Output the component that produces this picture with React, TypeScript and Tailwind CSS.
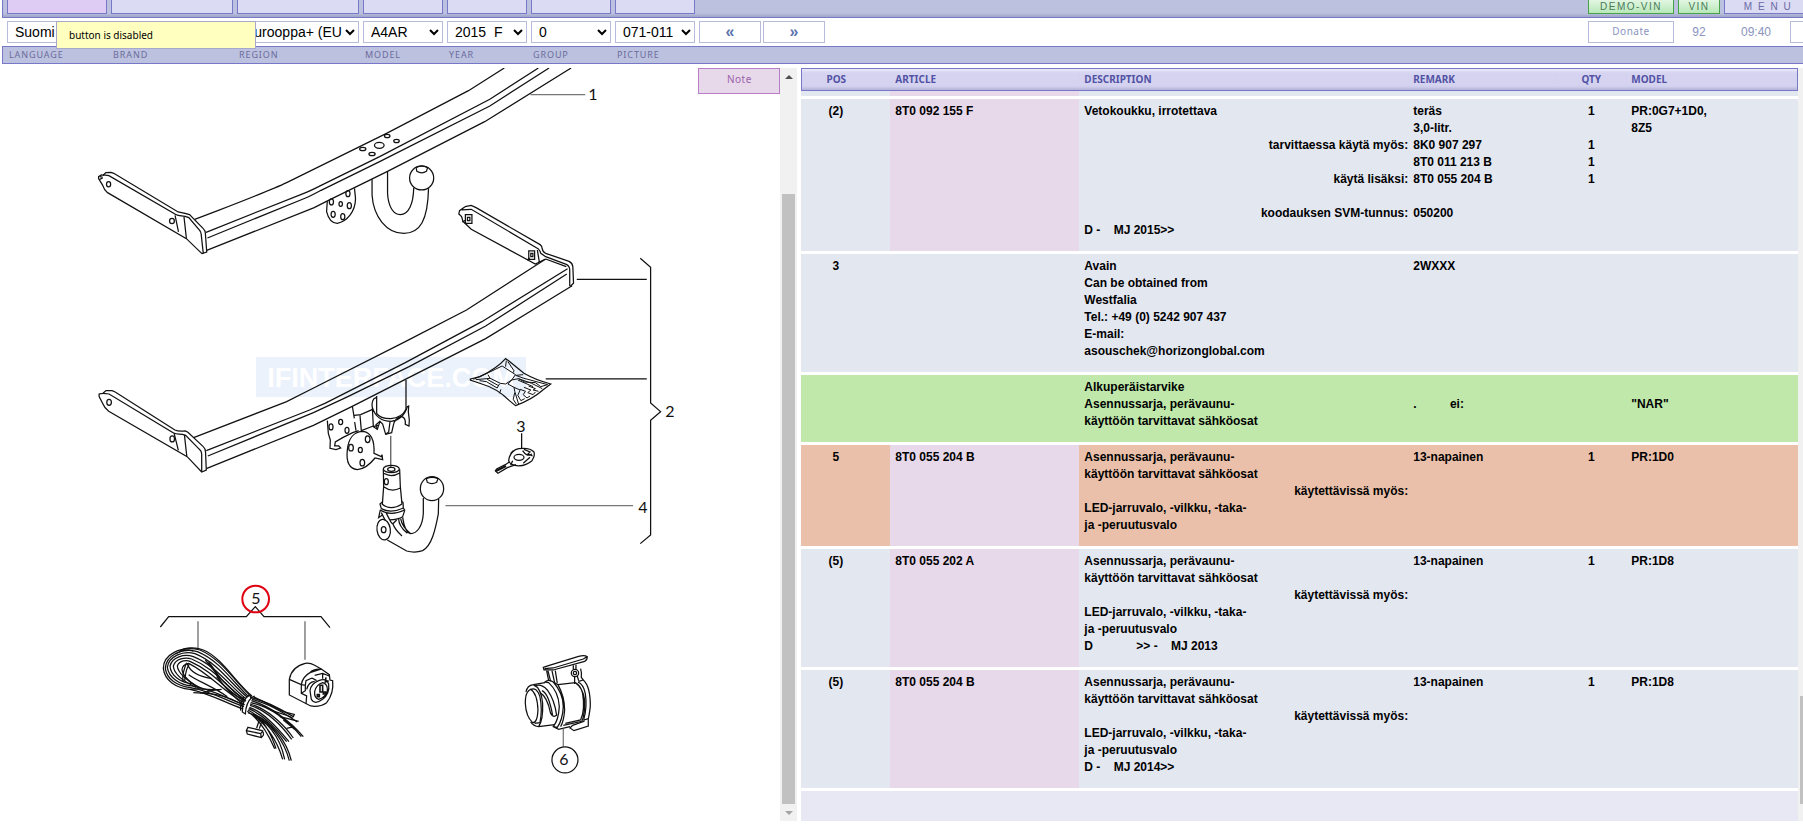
import type { ReactNode } from "react"
import clsx from "clsx"

const filters = [
	{ id: "language", label: "LANGUAGE", value: "Suomi", width: "w-[100px]" },
	{ id: "brand", label: "BRAND", value: "Audi", width: "w-[122px]" },
	{ id: "region", label: "REGION", value: "Eurooppa+ (EU)", width: "w-[122px]" },
	{ id: "model", label: "MODEL", value: "A4AR", width: "w-20" },
	{ id: "year", label: "YEAR", value: "2015\u00a0\u00a0F", width: "w-20" },
	{ id: "group", label: "GROUP", value: "0", width: "w-20" },
	{ id: "picture", label: "PICTURE", value: "071-011", width: "w-20" },
]

type Line = string | { right: string }

type Part = {
	pos: string
	article: string
	description: Line[]
	remark?: string[]
	qty?: string[]
	model?: string[]
	tone?: "green" | "orange"
}

const kit: Line[] = [
	"Asennussarja, perävaunu-",
	"käyttöön tarvittavat sähköosat",
	{ right: "käytettävissä myös:" },
	"LED-jarruvalo, -vilkku, -taka-",
	"ja -peruutusvalo",
]

const parts: Part[] = [
	{
		pos: "(2)",
		article: "8T0 092 155 F",
		description: [
			"Vetokoukku, irrotettava",
			"",
			{ right: "tarvittaessa käytä myös:" },
			"",
			{ right: "käytä lisäksi:" },
			"",
			{ right: "koodauksen SVM-tunnus:" },
			"D -    MJ 2015>>",
		],
		remark: ["teräs", "3,0-litr.", "8K0 907 297", "8T0 011 213 B", "8T0 055 204 B", "", "050200"],
		qty: ["1", "", "1", "1", "1"],
		model: ["PR:0G7+1D0,", "8Z5"],
	},
	{
		pos: "3",
		article: "",
		description: [
			"Avain",
			"Can be obtained from",
			"Westfalia",
			"Tel.: +49 (0) 5242 907 437",
			"E-mail:",
			"asouschek@horizonglobal.com",
		],
		remark: ["2WXXX"],
	},
	{
		pos: "",
		article: "",
		description: ["Alkuperäistarvike", "Asennussarja, perävaunu-", "käyttöön tarvittavat sähköosat"],
		remark: ["", ".          ei:"],
		model: ["", '"NAR"'],
		tone: "green",
	},
	{
		pos: "5",
		article: "8T0 055 204 B",
		description: kit,
		remark: ["13-napainen"],
		qty: ["1"],
		model: ["PR:1D0"],
		tone: "orange",
	},
	{
		pos: "(5)",
		article: "8T0 055 202 A",
		description: [...kit, "D             >> -    MJ 2013"],
		remark: ["13-napainen"],
		qty: ["1"],
		model: ["PR:1D8"],
	},
	{
		pos: "(5)",
		article: "8T0 055 204 B",
		description: [...kit, "D -    MJ 2014>>"],
		remark: ["13-napainen"],
		qty: ["1"],
		model: ["PR:1D8"],
	},
]

function Toolbar() {
	return (
		<header className="relative">
			<div className="ml-[2px] flex h-[18px] items-start gap-1 overflow-hidden border-b border-l border-[#7878c8] bg-[#bbc1df] pl-1 shadow-[inset_0_-3px_3px_-1px_#9fa5c8]">
				{filters.map((f, i) => (
					<button
						key={f.id}
						type="button"
						aria-label={f.label}
						className={clsx(
							"h-[14px] shrink-0 border border-t-0 border-[#7878c8]",
							f.width,
							i === 0 ? "bg-[#dfccf4]" : "bg-[#dbdbf3]",
						)}
					/>
				))}
				<div className="-mr-[9px] ml-auto flex gap-1 text-[10px] leading-[13px] tracking-[0.15em]">
					<button type="button" className="h-[14px] w-[86px] border border-t-0 border-[#48a048] bg-linear-to-b from-[#e2f6e2] to-[#b8e8b8] text-[#4a7a5c]">
						DEMO-VIN
					</button>
					<button type="button" className="h-[14px] w-[42px] border border-t-0 border-[#48a048] bg-linear-to-b from-[#e2f6e2] to-[#b8e8b8] text-[#4a7a5c]">
						VIN
					</button>
					<button type="button" className="h-[14px] w-[88px] border border-t-0 border-[#7878c8] bg-[#dbdbf3] whitespace-pre text-[#6a6aa4]">
						M E N U
					</button>
				</div>
			</div>

			<div className="flex h-7 items-center gap-1 overflow-hidden pl-[7px]">
				{filters.map((f) => (
					<select
						key={f.id}
						id={f.id}
						className={clsx("h-[22px] shrink-0 border border-[#b8bcdc] bg-white pl-[3px] text-sm text-black", f.width)}
					>
						<option>{f.value}</option>
					</select>
				))}
				<button type="button" className="h-[22px] w-[62px] shrink-0 border border-[#b8bcdc] text-base leading-[18px] font-bold text-[#5a72ac]">
					«
				</button>
				<button type="button" className="-ml-[2px] h-[22px] w-[62px] shrink-0 border border-[#b8bcdc] text-base leading-[18px] font-bold text-[#5a72ac]">
					»
				</button>
				<div className="-mr-[60px] ml-auto flex shrink-0 items-center text-xs text-[#8a94c0]">
					<button type="button" className="h-[22px] w-[86px] border border-[#b8bcdc] font-['Noto_Sans',sans-serif] text-[10px] tracking-wider">
						Donate
					</button>
					<span className="w-[50px] text-center">92</span>
					<span className="w-16 text-center">09:40</span>
					<button type="button" aria-label="More" className="ml-[2px] h-[22px] w-[73px] border border-[#b8bcdc]" />
				</div>
			</div>

			<div className="ml-[2px] flex h-[18px] items-center gap-1 border border-r-0 border-[#7878c8] bg-[#bbc1df] pl-[6px] font-['Noto_Sans',sans-serif] text-[9px] tracking-widest text-[#6c6c9c]">
				{filters.map((f) => (
					<label key={f.id} htmlFor={f.id} className={clsx("shrink-0", f.width)}>
						{f.label}
					</label>
				))}
			</div>

			<div
				role="tooltip"
				className="absolute top-[21px] left-14 flex h-7 w-[200px] items-center border border-[#a8a8cc] bg-[#ffffc0] pl-3 font-['Noto_Sans',sans-serif] text-[10px] text-black"
			>
				button is disabled
			</div>
		</header>
	)
}

function Hole({ at, r = [7, 9] }: { at: [number, number]; r?: [number, number] }) {
	return <ellipse cx={at[0]} cy={at[1]} rx={r[0]} ry={r[1]} />
}

function Callout({ x, y, children }: { x: number; y: number; children: ReactNode }) {
	return (
		<text x={x} y={y} textAnchor="middle" className="fill-[#111] font-['Lato',sans-serif] text-base">
			{children}
		</text>
	)
}

function Diagram() {
	return (
		<svg
			viewBox="0 68 780 753"
			strokeWidth="1.25"
			className="block h-[753px] w-[780px] shrink-0 fill-none stroke-[#111] [&_ellipse]:[vector-effect:non-scaling-stroke] [&_path]:[vector-effect:non-scaling-stroke]"
			role="img"
			aria-label="071-011"
		>
			<g stroke="none">
				<rect x="256" y="357" width="270" height="40" fill="#ebf2fb" />
				<text
					x="391"
					y="387"
					textAnchor="middle"
					fill="#fff"
					className="font-['Liberation_Sans',sans-serif] text-[27px] font-bold"
				>
					IFINTERFACE.COM
				</text>
			</g>

			{/* fixed tow bar */}
			<g transform="translate(80 60) scale(.3444 .3333)">
				<path d="M333 478L400 452Q560 388 600 368L890 220L1128 92L1232 24" />
				<path d="M366 517L650 400Q670 392 700 376L870 290L1190 118L1331 24" />
				<path d="M370 534L655 414Q670 408 700 391L870 305L1190 138L1362 24" />
				<path d="M366 572L680 443L720 422L893 334L1175 185L1426 24" />
				<Hole at={[892, 228]} r={[8, 5]} />
				<Hole at={[919, 243]} r={[8, 5]} />
				<Hole at={[869, 256]} r={[14, 9]} />
				<Hole at={[821, 267]} r={[9, 5]} />
				<Hole at={[848, 282]} r={[9, 5]} />
				<path d="M68 345L75 338L90 337L98 340L285 456L305 460L318 464L358 506Q364 512 364 520L368 576L354 581L309 536L80 398Q70 390 66 376L54 356V350L62 345L70 346Z" />
				<path d="M58 350L66 352M57 358L66 354M68 345L84 347L272 460Q282 468 305 469L316 473L348 512Q352 518 352 524L358 581M276 466L286 516M302 471L309 536" />
				<Hole at={[83, 373]} r={[6, 8]} />
				<Hole at={[267, 483]} r={[7, 8]} />
				<path d="M848 358V405C852 470 890 520 940 520C988 520 1010 480 1012 385" />
				<path d="M893 334V400C895 440 910 464 930 464C955 464 968 430 969 383" />
				<Hole at={[992, 354]} r={[35, 36]} />
				<path d="M976 323L978 334Q992 343 1006 334L1009 323Q992 314 976 323Z" />
				<path d="M718 424L716 455C722 480 735 490 747 490C775 485 800 455 800 415L797 385" />
				<Hole at={[778, 401]} r={[6, 9]} />
				<Hole at={[730, 426]} r={[6, 9]} />
				<Hole at={[757, 432]} r={[5, 7]} />
				<Hole at={[782, 437]} r={[6, 9]} />
				<Hole at={[735, 463]} r={[6, 9]} />
				<Hole at={[763, 470]} r={[6, 9]} />
				<path d="M1308 104H1467" stroke="#777" />
				<path d="M1118 440L1136 436L1150 443L1336 554Q1342 558 1342 566Q1343 575 1352 580L1420 604Q1430 609 1431 620L1433 670L1424 679" />
				<path d="M1118 440L1102 452L1100 462L1108 470L1112 484L1136 508L1322 612L1352 597M1108 450L1136 448L1330 566Q1336 572 1338 580L1352 590L1412 613Q1422 618 1422 630V679M1328 570L1334 608M1352 597L1412 620" />
				<path d="M1119 464H1138V490H1119ZM1125 472H1132V482H1125ZM1110 486L1120 480M1303 573H1320V598H1303ZM1309 580H1315V590H1309Z" />
				<path d="M1298 600L1306 594" />
			</g>

			{/* detachable tow bar, bag, callout bracket */}
			<g transform="translate(80 250) scale(.3827 .3333)">
				<path d="M297 563L540 455L600 420L850 275L1010 180L1216 28" />
				<path d="M330 602L600 480L640 460L850 338L1050 215L1274 56" />
				<path d="M334 618L610 488L700 440L860 350L1060 228L1272 72" />
				<path d="M330 656L610 526L710 470L850 388L1060 266L1286 107" />
				<path d="M60 430L68 422L84 422L92 426L248 540Q256 545 275 543L282 547L322 590Q328 596 328 606L330 660L318 666L280 620L75 484Q64 474 60 462L50 440V432L60 430Z" />
				<path d="M60 430L76 432L240 546Q248 553 268 553L276 556L312 598Q318 604 318 612V666M246 550L257 601M273 556L279 618" />
				<Hole at={[76, 457]} r={[6, 9]} />
				<Hole at={[241, 567]} r={[6, 9]} />
				<path d="M1298 88H1481M1217 387H1481M1154 550V597" />
				<path d="M955 767H1445" stroke="#777" strokeWidth="1.4" />
				<path d="M812 557V652" stroke="#555" />
				<path d="M1464 25L1491 52V459L1517 485L1491 511V855L1464 881" />
				<path d="M1020 387L1045 380Q1090 355 1112 326L1120 332L1160 370Q1190 390 1230 402L1212 418Q1180 450 1138 467L1122 452Q1090 415 1050 402L1020 390Z" />
				<path d="M1028 388L1060 372L1103 348L1138 374L1128 390L1112 402L1098 400L1072 385L1034 389M1044 392L1062 395L1090 414L1096 402M1064 388L1092 406M1114 332L1112 350M1118 335L1134 362L1132 368M1066 374L1072 386M1138 376L1160 385L1222 404L1204 410L1190 398L1162 396L1146 386L1128 390L1118 402L1134 412L1136 424L1146 462M1140 376L1158 374M1134 412L1150 420L1144 436L1152 452L1162 446M1150 418L1164 424L1158 434L1168 444L1176 438M1160 412L1178 420L1170 428L1184 434L1190 426M1172 408L1190 416L1184 420L1198 424M1146 386L1180 400L1208 416M1100 418L1096 430M1136 428L1132 448L1140 462M1144 390L1184 410" strokeWidth="1" />
			</g>

			{/* sleeve, pin and swan neck, key */}
			<g transform="translate(300 370) scale(.3333)">
				<path d="M230 78V130Q240 146 272 146Q306 144 318 118V30" />
				<path d="M230 82L222 86Q214 96 217 112Q230 154 274 154Q310 150 322 110L326 108L325 126L328 150L327 168L316 163Q318 140 302 140Q284 146 280 166L275 188L257 193L248 162L240 154L232 178L220 170L217 112" />
				<path d="M257 193L266 186L270 156M232 178L228 164L240 154M220 170L234 166" />
				<path d="M82 152L85 190L91 210L90 235L108 239L122 234L116 228H104L106 216L128 203L158 188L176 182" />
				<path d="M157 108L163 145M164 156L168 182M163 136L182 134L218 118M180 136L184 182L220 168" />
				<Hole at={[93, 171]} r={[6, 9]} />
				<Hole at={[122, 156]} r={[6, 8]} />
				<Hole at={[141, 181]} r={[6, 9]} />
				<path d="M142 240C145 205 162 184 190 184C214 188 224 208 222 250L244 260L246 254L248 269L225 264Q200 296 172 299C148 296 138 275 142 240Z" />
				<Hole at={[203, 208]} r={[7, 10]} />
				<Hole at={[153, 233]} r={[7, 10]} />
				<Hole at={[181, 240]} r={[6, 8]} />
				<Hole at={[187, 278]} r={[7, 10]} />
				<Hole at={[274, 297]} r={[24, 11]} />
				<Hole at={[274, 298]} r={[11, 6]} />
				<path d="M250 298L251 350L247 404M299 298L301 350L306 402M251 350Q275 368 301 354M251 310Q275 324 299 309" />
				<Hole at={[259, 335]} r={[6, 9]} />
				<path d="M246 402Q272 424 306 402M247 396L240 402L244 416Q272 432 310 414L309 397L304 394M240 420Q272 440 314 420L310 414M241 420L236 443L246 436M314 422L308 440Q296 448 268 450M244 428L256 452M258 428L272 455L278 462" />
				<ellipse cx="251" cy="479" rx="20" ry="31" transform="rotate(-8 251 479)" />
				<Hole at={[251, 479]} r={[7, 9]} />
				<path d="M262 510L320 543Q345 550 368 542C395 528 406 480 415 432L416 386" />
				<path d="M370 384V430C368 470 350 491 332 491C318 488 312 470 308 442M278 460Q285 480 306 498M296 446Q296 468 322 490M302 446Q306 470 332 491M278 462L290 450" />
				<Hole at={[396, 356]} r={[35, 36]} />
				<path d="M379 326L382 337Q396 345 410 337L414 326Q396 318 379 326Z" />
				<path d="M628 262Q636 240 656 236Q690 232 702 246Q706 256 696 272Q680 286 656 288Q630 286 626 272Z" />
				<Hole at={[657, 262]} r={[15, 9]} />
				<path d="M668 242Q680 262 696 252M672 238L690 246L684 252L698 258M632 250L640 242M670 280L690 262" />
				<path d="M628 276L616 284L590 297L586 303L594 310L622 293L648 284M638 272L632 286" />
				<path d="M588 303L618 288" strokeWidth="2" />
			</g>

			{/* wiring kit and 13-pin socket */}
			<g transform="translate(140 560) scale(.3333)">
				<path d="M61 201L86 170H319L346 140L372 170H543L570 203" />
				<path d="M174 184V263M495 184V299" stroke="#777" strokeWidth="1.4" />
				<path d="M332 408C285 365 245 298 180 270C120 256 70 285 70 325C74 362 108 384 150 388C215 402 262 432 310 447" />
				<path d="M326 410C280 368 240 302 172 275C122 262 78 288 76 325C80 358 112 378 152 383C215 394 265 425 312 440" />
				<path d="M322 412C274 374 236 310 165 281C128 270 86 290 82 322C86 352 118 374 156 378C218 388 268 420 314 434" />
				<path d="M318 416C270 380 230 318 160 290C132 280 96 292 90 318C92 348 122 368 160 372" />
				<path d="M316 420C262 385 226 326 155 297C136 290 106 296 100 318C102 344 130 364 168 382" />
				<path d="M314 424C258 392 222 336 150 304C142 300 118 300 112 318C114 340 138 358 178 386" />
				<path d="M312 428C250 396 215 345 146 310C136 312 126 318 126 330C130 350 150 370 190 388" />
				<path d="M118 276C130 262 165 260 190 270C245 292 290 372 336 408M106 282C130 268 150 268 160 274" />
				<path d="M140 308C132 325 128 345 128 362M148 312C136 330 136 348 134 362M142 312C150 335 180 350 215 356M146 344C170 362 220 380 262 410M150 388C190 384 220 392 245 388M160 398C230 400 270 410 310 436M180 400C205 394 220 388 240 390" />
				<path d="M216 320C240 370 270 400 308 432M196 300C236 350 270 390 318 424M206 306C226 330 240 360 260 372M230 350C250 380 280 405 310 420" />
				<path d="M326 406Q306 422 307 456L316 462Q318 428 336 412ZM312 410Q300 430 302 452M336 412L344 408" />
				<path d="M330 412C370 420 410 440 460 470L464 462M336 418C380 428 420 450 472 486M334 422C390 438 450 482 490 530M332 428C390 440 440 478 484 530M330 432C380 446 430 490 460 534" />
				<path d="M330 436C375 450 420 490 455 538M328 442C370 456 410 500 447 545M326 446C366 462 405 500 440 545M324 450C360 468 390 510 408 566M322 454C356 476 384 520 404 566M324 458C380 478 420 530 434 598M330 460C370 480 412 540 428 598" />
				<path d="M340 462C390 482 440 540 454 602M346 464C390 490 432 540 448 602M340 410C380 430 400 440 430 455L462 463M396 452L446 468L458 474M420 470L476 484M430 480L464 508M440 505L462 500" />
				<path d="M358 480L350 504M366 482L358 506M324 502L366 512Q372 518 370 526L364 533L322 522L319 512ZM319 512L362 521L370 512M362 521L364 533" />

				<path d="M448 358Q455 320 496 310Q510 308 524 316L545 328L568 344L570 360L578 362Q582 400 560 428Q540 442 512 438L448 405Z" />
				<path d="M448 358L484 374V400L500 408L498 432M484 374Q488 350 510 338L540 328M484 374L496 376L498 362L516 354M496 376V392L484 400M500 388Q505 366 524 364M510 338Q520 326 545 328M516 354L530 362M524 346L548 340L568 348M548 340V356" />
				<path d="M510 392Q512 372 536 362Q560 352 566 372Q570 400 548 418Q524 436 514 418ZM524 395Q528 374 548 368Q564 372 562 392Q555 414 536 418Q522 414 524 395Z" />
				<path d="M540 376H548V396H540ZM532 404H538V410H532ZM550 396H556V402H550ZM566 362L556 366L558 352" strokeWidth="1.6" />
				<ellipse cx="347" cy="117" rx="40" ry="40" stroke="#e00010" strokeWidth="2" />
			</g>

			{/* adapter */}
			<g transform="translate(140 560) scale(.3333)">
				<path d="M1210 322L1228 316L1316 289Q1334 284 1342 290Q1342 300 1334 304L1240 330H1212ZM1214 326L1240 324L1330 297L1342 290" />
				<path d="M1220 332L1226 362M1224 332L1232 364M1246 332L1252 370M1236 332L1244 368" />
				<Hole at={[1305, 339]} r={[11, 11]} />
				<Hole at={[1305, 339]} r={[5, 5]} />
				<path d="M1300 316V328M1308 314V328M1304 350V372M1312 348L1316 362M1322 326Q1326 340 1324 352L1330 360Q1352 380 1351 440Q1348 465 1345 476V498L1302 512L1290 504L1298 496L1332 484V476Q1342 440 1336 400Q1330 372 1314 366M1330 360L1316 364M1345 476L1332 480" />
				<path d="M1254 374L1306 368Q1330 384 1334 420Q1336 460 1326 484L1270 496M1306 368Q1322 376 1328 400Q1336 450 1322 480L1276 490" />
				<path d="M1215 366Q1226 356 1240 366Q1270 400 1270 440Q1268 480 1252 502L1240 500Q1256 480 1258 440Q1256 395 1226 368ZM1240 366L1254 374Q1274 410 1274 450Q1272 482 1262 500M1240 500L1256 508L1290 500" />
				<path d="M1180 374L1215 368M1196 500L1244 494M1180 374Q1162 376 1158 396M1180 374Q1204 384 1208 430Q1210 480 1196 500Q1182 500 1172 486" />
				<path d="M1166 392Q1156 400 1156 430Q1158 470 1178 488Q1192 490 1194 450Q1192 400 1172 388ZM1172 388Q1190 380 1200 410Q1208 450 1200 488L1184 490" />
				<path d="M1184 378Q1204 370 1222 390Q1244 420 1250 466Q1240 474 1232 460Q1222 410 1200 398M1206 392Q1226 400 1238 466" />
				<path d="M1270 506V560" stroke="#777" />
				<ellipse cx="1275" cy="600" rx="39" ry="39" />
			</g>

			<g stroke="none">
				<Callout x={593} y={100}>1</Callout>
				<Callout x={670} y={417}>2</Callout>
				<Callout x={521} y={432}>3</Callout>
				<Callout x={643} y={513}>4</Callout>
				<Callout x={256} y={604}>5</Callout>
				<Callout x={564} y={765}>6</Callout>
			</g>
		</svg>
	)
}

function Scrollbar({ thumb, arrows }: { thumb: string; arrows?: boolean }) {
	return (
		<div className="flex w-[17px] shrink-0 flex-col items-center bg-[#f1f1f1] px-[2px]">
			<div className="flex h-[17px] shrink-0 items-center">
				{arrows && <span className="border-x-4 border-b-4 border-x-transparent border-b-[#505050]" />}
			</div>
			<div className={thumb} />
			<div className="w-full grow-3 basis-0 bg-[#c1c1c1]" />
			<div className="flex h-[17px] shrink-0 items-center">
				{arrows && <span className="border-x-4 border-t-4 border-x-transparent border-t-[#a3a3a3]" />}
			</div>
		</div>
	)
}

function Lines({ lines = [] }: { lines?: Line[] }) {
	return lines.map((line, i) => (
		<div key={i} className={clsx("h-[17px] whitespace-pre", typeof line !== "string" && "text-right")}>
			{typeof line === "string" ? line : line.right}
		</div>
	))
}

function PartsTable() {
	const th = "h-[23px] border-y border-[#7878c8] bg-[#d5d3f0] px-[5px] shadow-[inset_0_4px_3px_-2px_#ecebfa,inset_0_-4px_3px_-2px_#b4b2d8]"
	const td = "border-b-[3px] border-white bg-clip-padding px-[5px] pt-1 pb-3 align-top"

	return (
		<table className="w-full table-fixed border-separate border-spacing-0 text-left text-xs leading-[17px] font-bold text-black">
			<colgroup>
				<col className="w-[89px]" />
				<col className="w-[189px]" />
				<col className="w-[33%]" />
				<col className="w-[148px]" />
				<col className="w-[70px]" />
				<col />
			</colgroup>
			<thead className="font-['Noto_Sans',sans-serif] text-[10px] text-[#5252a4]">
				<tr>
					<th className={clsx(th, "border-l pr-[25px] text-center")}>POS</th>
					<th className={th}>ARTICLE</th>
					<th className={th}>DESCRIPTION</th>
					<th className={th}>REMARK</th>
					<th className={clsx(th, "text-center")}>QTY</th>
					<th className={clsx(th, "border-r")}>MODEL</th>
				</tr>
			</thead>
			<tbody>
				<tr className="bg-white">
					<td className="h-2 border-b-[3px] border-white bg-[#e3e7f0]" />
					<td className="h-2 border-b-[3px] border-white bg-[#e7d8ea]" />
					<td colSpan={4} className="h-2 border-b-[3px] border-white bg-[#e3e7f0]" />
				</tr>
				{parts.map((part, i) => {
					const cell = clsx(
						td,
						!part.tone && "bg-[#e3e7f0]",
						part.tone === "green" && "bg-[#bfe8aa]",
						part.tone === "orange" && "bg-[#eac0aa]",
					)
					return (
						<tr key={i}>
							<td className={clsx(cell, "pr-[25px] text-center")}>{part.pos}</td>
							<td className={part.article ? clsx(td, "bg-[#e7d8ea]") : cell}>{part.article}</td>
							<td className={clsx(cell, "pr-0")}>
								<Lines lines={part.description} />
							</td>
							<td className={cell}>
								<Lines lines={part.remark} />
							</td>
							<td className={clsx(cell, "text-center")}>
								<Lines lines={part.qty} />
							</td>
							<td className={cell}>
								<Lines lines={part.model} />
							</td>
						</tr>
					)
				})}
				<tr>
					<td colSpan={6} className="h-[30px] bg-[#e8e8f4]" />
				</tr>
			</tbody>
		</table>
	)
}

export default function App() {
	return (
		<div className="flex min-h-screen flex-col overflow-hidden bg-white font-['Liberation_Sans',Arial,sans-serif]">
			<Toolbar />
			<main className="grid grid-cols-[4fr_5fr] pt-1">
				<section className="relative mr-1 flex min-w-0">
					<div className="min-w-0 flex-1 overflow-hidden">
						<Diagram />
					</div>
					<button
						type="button"
						className="absolute top-0 right-[17px] h-[26px] w-[82px] border border-[#b87cc8] bg-[#e7d8ea] pb-1 font-['Noto_Sans',sans-serif] text-[10px] tracking-wider text-[#9a62aa]"
					>
						Note
					</button>
					<Scrollbar arrows thumb="min-h-[109px] shrink-0" />
				</section>
				<section className="-mr-3 flex min-w-0">
					<div className="min-w-0 flex-1">
						<PartsTable />
					</div>
					<Scrollbar thumb="grow-[17] basis-0" />
				</section>
			</main>
		</div>
	)
}
